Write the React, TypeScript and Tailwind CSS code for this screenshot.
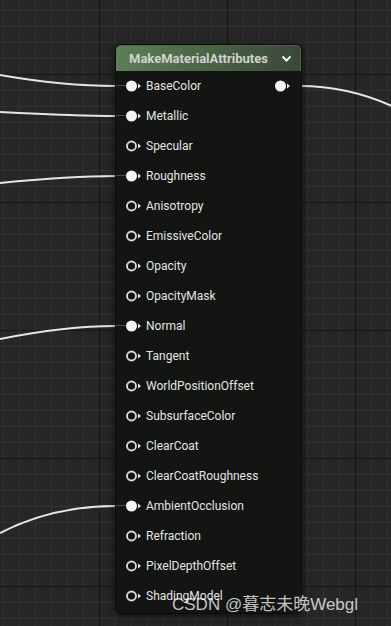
import React from "react";

const pins = [
  { name: "BaseColor", on: true, out: true },
  { name: "Metallic", on: true },
  { name: "Specular", on: false },
  { name: "Roughness", on: true },
  { name: "Anisotropy", on: false },
  { name: "EmissiveColor", on: false },
  { name: "Opacity", on: false },
  { name: "OpacityMask", on: false },
  { name: "Normal", on: true },
  { name: "Tangent", on: false },
  { name: "WorldPositionOffset", on: false },
  { name: "SubsurfaceColor", on: false },
  { name: "ClearCoat", on: false },
  { name: "ClearCoatRoughness", on: false },
  { name: "AmbientOcclusion", on: true },
  { name: "Refraction", on: false },
  { name: "PixelDepthOffset", on: false },
  { name: "ShadingModel", on: false },
];

function Pin({ on }: { on: boolean }) {
  return (
    <svg width="16" height="12" viewBox="0 0 16 12" className="shrink-0">
      {on ? (
        <circle cx="5.5" cy="6" r="5.5" fill="#f4f4f4" />
      ) : (
        <circle cx="5.5" cy="6" r="4.5" fill="#141414" stroke="#d8d8d8" strokeWidth="1.9" />
      )}
      <polygon points="12,3.5 15,6 12,8.5" fill="#e6e6e6" />
    </svg>
  );
}

export default function App() {
  return (
    <div
      className="relative w-[391px] h-[626px] overflow-hidden bg-[#262626] bg-[linear-gradient(#161616_1px,transparent_1px),linear-gradient(90deg,#161616_1px,transparent_1px),linear-gradient(#323232_1px,transparent_1px),linear-gradient(90deg,#323232_1px,transparent_1px)] bg-[size:128px_128px,128px_128px,16px_16px,16px_16px] bg-[position:99px_74px,99px_74px,3px_10px,3px_10px]"
      style={{ fontFamily: "Roboto, 'Noto Sans', sans-serif" }}
    >
      {/* wires */}
      <svg className="absolute inset-0" width="391" height="626" fill="none" stroke="#e6e6e6" strokeWidth="2">
        <path d="M0 75 C40 82, 80 86, 116 86" />
        <path d="M0 112 C40 114, 80 116, 116 116" />
        <path d="M0 183 C40 179, 80 176, 116 176" />
        <path d="M0 339 C40 331, 80 326, 116 326" />
        <path d="M0 533 C35 515, 75 506, 116 506" />
        <path d="M300 86 C335 86, 365 94, 392 106" />
      </svg>

      <div className="relative ml-[115px] mt-[44px] w-[187px] rounded-[6px] border border-[#0b0b0b] bg-[#131513] shadow-[0_2px_8px_rgba(0,0,0,0.6)]">
        <div className="flex h-[26px] items-center justify-between rounded-t-[5px] border-t border-r border-[#5a5f58] bg-[linear-gradient(90deg,#5d7e58_0%,#4c6647_45%,#3a4739_100%)] pl-[13px] pr-[8px]">
          <span className="text-[13px] font-bold text-[#cfd3cd]">MakeMaterialAttributes</span>
          <svg width="11" height="8" viewBox="0 0 11 8" fill="none" stroke="#f2f2f2" strokeWidth="2">
            <polyline points="1.5,1.5 5.5,5.5 9.5,1.5" />
          </svg>
        </div>
        <div className="pb-[2px]">
          {pins.map((p) => (
            <div key={p.name} className="relative flex h-[30px] items-center pl-[10px] pr-[10px]">
              {p.on && <div className="absolute left-0 top-[14px] h-[1px] w-[10px] bg-[#4a4a4a]" />}
              <Pin on={p.on} />
              <span className="ml-[4px] text-[12px] text-[#e4e4e4]">{p.name}</span>
              {p.out && (
                <div className="ml-auto">
                  <Pin on />
                </div>
              )}
            </div>
          ))}
        </div>
      </div>

      <div
        className="absolute left-[172px] top-[592px] text-[17px] text-white/75 whitespace-nowrap"
        style={{ fontFamily: "'Liberation Sans', 'Noto Sans CJK SC', sans-serif" }}
      >
        CSDN @暮志未晚Webgl
      </div>
    </div>
  );
}
